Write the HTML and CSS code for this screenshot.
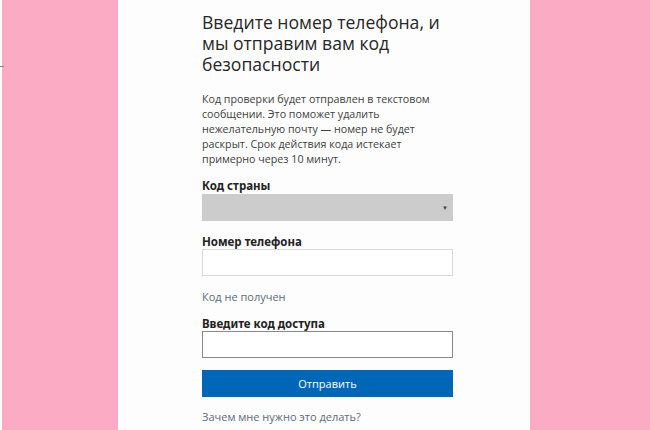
FILE: index.html
```html
<!DOCTYPE html>
<html lang="ru">
<head>
    <meta charset="UTF-8">
    <meta name="viewport" content="width=device-width, initial-scale=1.0">
    <title>Введите номер телефона</title>
    <link rel="stylesheet" href="styles.css">
</head>
<body>
    <div class="page">
        <div class="edge"><span class="tick"></span></div>
        <div class="side"></div>

        <div class="main">
            <h1>Введите номер телефона, и мы отправим вам код безопасности</h1>
            <p class="intro">Код проверки будет отправлен в текстовом сообщении. Это поможет удалить нежелательную почту — номер не будет раскрыт. Срок действия кода истекает примерно через 10 минут.</p>

            <form class="form">
                <label class="label first">Код страны</label>
                <div class="select"><span class="arrow">▼</span></div>

                <label class="label">Номер телефона</label>
                <input type="text" class="field">

                <a href="#" class="link nocode">Код не получен</a>

                <label class="label code">Введите код доступа</label>
                <input type="text" class="field dark">

                <button type="button" class="send">Отправить</button>

                <a href="#" class="link why">Зачем мне нужно это делать?</a>
            </form>
        </div>

        <div class="side right"></div>
    </div>
</body>
</html>
```

FILE: styles.css
```css
body {
    margin: 0;
    font-family: "Open Sans", "Noto Sans", sans-serif;
    color: #333;
    background: #fdfdfd;
}
.page {
    display: flex;
    height: 430px;
    overflow: hidden;
}
.edge {
    width: 2px;
    position: relative;
}
.tick {
    position: absolute;
    top: 66px;
    left: 0;
    width: 4px;
    height: 1px;
    background: #888;
}
.side {
    width: 116px;
    background: #fcabc5;
}
.side.right {
    width: 120px;
}
.main {
    width: 328px;
    padding: 12px 0 0 84px;
    background: #fdfdfd;
}
h1 {
    margin: 0;
    font-size: 17.6px;
    font-weight: 400;
    line-height: 21px;
    color: #262626;
    width: 260px;
}
.intro {
    margin: 17px 0 0;
    font-size: 10.7px;
    line-height: 15px;
    color: #404040;
    width: 240px;
}
.form {
    display: flex;
    flex-direction: column;
    width: 251px;
}
.label {
    font-family: "Noto Sans", sans-serif;
    font-size: 11.5px;
    font-weight: 700;
    line-height: 15px;
    color: #222;
    margin-top: 13px;
}
.label.first {
    margin-top: 11px;
}
.label.code {
    margin-top: 12px;
}
.select {
    margin-top: 1px;
    height: 27px;
    background: #cccccc;
    display: flex;
    align-items: center;
    justify-content: flex-end;
    padding-right: 5px;
}
.arrow {
    font-size: 6px;
    color: #444;
}
.field {
    box-sizing: border-box;
    margin: 0;
    height: 27px;
    width: 100%;
    border: 1px solid #d8d8d8;
    background: #fff;
}
.field.dark {
    border: 1px solid #888;
}
.link {
    font-size: 11px;
    line-height: 15px;
    color: #5a6b7b;
    text-decoration: none;
}
.nocode {
    margin-top: 13px;
}
.send {
    margin-top: 12px;
    height: 27px;
    border: none;
    background: #0067b8;
    color: #fff;
    font-family: "Open Sans", sans-serif;
    font-size: 11px;
    padding: 0;
}
.why {
    margin-top: 12px;
}
```
